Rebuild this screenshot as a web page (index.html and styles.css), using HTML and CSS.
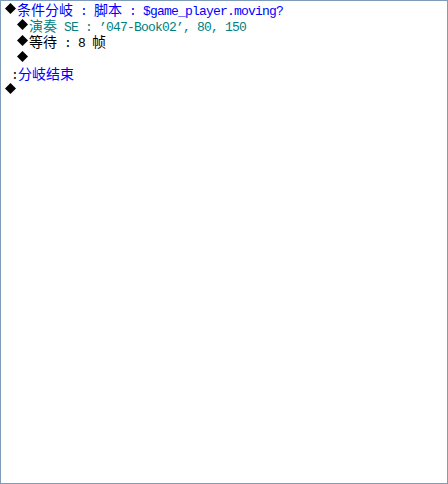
FILE: index.html
```html
<!DOCTYPE html>
<html lang="zh">
<head>
<meta charset="utf-8">
<title>Event list</title>
<link rel="stylesheet" href="styles.css">
</head>
<body>
<div class="list">
  <div class="row blue"><span class="dia"></span><span class="c">条件分岐</span> : <span class="c">脚本</span> : $game_player.moving?</div>
  <div class="row ind teal"><span class="dia"></span><span class="c">演奏</span> SE : ’047-Book02’, 80, 150</div>
  <div class="row ind"><span class="dia"></span><span class="c">等待</span> : 8 <span class="c">帧</span></div>
  <div class="row ind"><span class="dia"></span></div>
  <div class="row end">:<span class="c blue">分岐结束</span></div>
  <div class="row"><span class="dia"></span></div>
</div>
</body>
</html>
```
FILE: styles.css
```css
html, body {
  margin: 0;
  padding: 0;
  background: #ffffff;
}
.list {
  box-sizing: border-box;
  width: 448px;
  height: 484px;
  border: 1px solid #7f9db9;
  padding: 0 0 0 4px;
  background: #ffffff;
  color: #000000;
  font-family: "Liberation Mono", monospace;
  font-size: 13px;
  letter-spacing: -0.8px;
  line-height: 16px;
}
.row {
  height: 16px;
  white-space: pre;
}
.ind {
  padding-left: 12px;
}
.end {
  padding-left: 6px;
}
.c {
  font-family: "Noto Sans CJK SC", sans-serif;
  font-size: 14px;
  letter-spacing: 0;
}
.dia {
  display: inline-block;
  vertical-align: top;
  width: 11px;
  height: 11px;
  margin: 2px 1px 0 0;
  background: #000000;
  clip-path: polygon(50% 0, 100% 50%, 50% 100%, 0 50%);
}
.blue {
  color: #0000ff;
}
.teal {
  color: #008080;
}
```
